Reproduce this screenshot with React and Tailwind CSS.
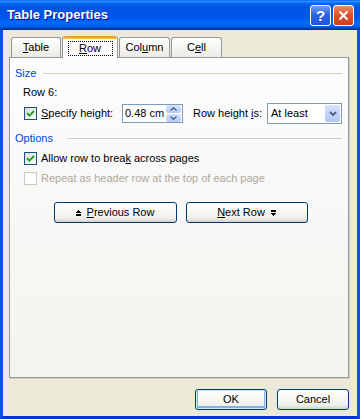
import React from 'react'

const font = { fontFamily: '"Liberation Sans", Arial, sans-serif' }

function Check({ checked, disabled }) {
  return (
    <span
      className={
        disabled
          ? 'flex h-[13px] w-[13px] shrink-0 items-center justify-center border border-[#cac8bb] bg-white'
          : 'flex h-[13px] w-[13px] shrink-0 items-center justify-center border border-[#1c5180] bg-[linear-gradient(135deg,#dcdcd7,#ffffff)]'
      }
    >
      {checked ? (
        <svg width="9" height="9" viewBox="0 0 9 9">
          <path d="M1 4.2 L3.4 6.6 L8 2" stroke="#21a121" strokeWidth="1.9" fill="none" />
        </svg>
      ) : null}
    </span>
  )
}

function Tab({ children, active, w }) {
  if (active) {
    return (
      <div
        className="relative z-10 -mb-px ml-px flex h-[22px] flex-col rounded-t-[3px] border-x border-[#919b9c] bg-[#fcfcfe]"
        style={{ width: w }}
      >
        <div className="h-[3px] rounded-t-[3px] bg-[linear-gradient(180deg,#e68b2c,#ffc83c)]" />
        <div className="flex flex-1 items-center justify-center">
          <span className="flex h-[15px] w-[45px] items-center justify-center border border-dotted border-black">
            {children}
          </span>
        </div>
      </div>
    )
  }
  return (
    <div
      className="ml-px flex h-[20px] items-center justify-center rounded-t-[3px] border-x border-t border-[#919b9c] bg-[linear-gradient(180deg,#ffffff,#f3f3ef_60%,#ecebe6)]"
      style={{ width: w }}
    >
      {children}
    </div>
  )
}

function Btn({ children, w, def }) {
  return (
    <button
      className={
        def
          ? 'flex h-[21px] items-center justify-center rounded-[3px] border border-[#003c74] bg-[linear-gradient(180deg,#ffffff,#f0f0ea_80%,#d6d0c5)] shadow-[inset_0_0_0_1px_#cee7ff,inset_0_-1px_0_2px_#89ade4]'
          : 'flex h-[21px] items-center justify-center rounded-[3px] border border-[#003c74] bg-[linear-gradient(180deg,#ffffff,#f0f0ea_80%,#d6d0c5)]'
      }
      style={{ width: w }}
    >
      {children}
    </button>
  )
}

function UpIcon() {
  return (
    <svg width="5" height="6" viewBox="0 0 5 6" className="shrink-0">
      <rect x="2" y="0" width="1" height="1" fill="#000" />
      <rect x="1" y="1" width="3" height="1" fill="#000" />
      <rect x="0" y="2" width="5" height="1" fill="#000" />
      <rect x="0" y="4" width="5" height="2" fill="#000" />
    </svg>
  )
}

function DownIcon() {
  return (
    <svg width="5" height="6" viewBox="0 0 5 6" className="shrink-0">
      <rect x="0" y="0" width="5" height="2" fill="#000" />
      <rect x="0" y="3" width="5" height="1" fill="#000" />
      <rect x="1" y="4" width="3" height="1" fill="#000" />
      <rect x="2" y="5" width="1" height="1" fill="#000" />
    </svg>
  )
}

export default function App() {
  return (
    <div className="flex h-[419px] w-[360px] flex-col bg-[#ece9d8] text-[11px] text-black" style={font}>
      {/* title bar */}
      <div className="flex h-[30px] shrink-0 items-center bg-[linear-gradient(180deg,#0058ee_0%,#3593ff_4%,#288eff_6%,#127dff_8%,#036ffc_10%,#0262ee_14%,#0057e5_20%,#0054e3_24%,#0055eb_56%,#005bf5_66%,#026afe_76%,#0062ef_86%,#0052d6_92%,#0040ab_94%,#003092_100%)] pl-[7px] pr-[6px]">
        <span className="flex-1 text-[13px] font-bold text-white [text-shadow:1px_1px_#0f1089]">Table Properties</span>
        <div className="flex h-[21px] w-[21px] items-center justify-center rounded-[3px] border border-white bg-[linear-gradient(180deg,#6d9cf7,#2a65e6_45%,#1a55dc)] text-[15px] font-bold leading-none text-white">
          ?
        </div>
        <div className="ml-[2px] flex h-[21px] w-[21px] items-center justify-center rounded-[3px] border border-white bg-[linear-gradient(180deg,#ee8a6c,#e0522b_45%,#c8411a)]">
          <svg width="11" height="11" viewBox="0 0 11 11">
            <path d="M1.5 1.5 L9.5 9.5 M9.5 1.5 L1.5 9.5" stroke="#fff" strokeWidth="2" />
          </svg>
        </div>
      </div>

      {/* body */}
      <div className="flex flex-1 flex-col border-x-[3px] border-b-[3px] border-x-[#0c52e6] border-b-[#0835d8] pl-[6px] pr-[5px] pt-[6px]">
        <div className="flex h-[21px] items-end pl-px">
          <Tab w={50}>
            <span><u>T</u>able</span>
          </Tab>
          <Tab w={56} active>
            <span><u>R</u>ow</span>
          </Tab>
          <Tab w={51}>
            <span>Col<u>u</u>mn</span>
          </Tab>
          <Tab w={51}>
            <span>C<u>e</u>ll</span>
          </Tab>
        </div>

        <div className="flex h-[321px] w-[340px] flex-col border border-[#919b9c] bg-[linear-gradient(180deg,#fcfcfe,#f4f3ee)] pl-[5px] pr-[6px] shadow-[1px_1px_0_#d0cebf]">
          <div className="mt-[8px] flex h-[14px] items-center">
            <span className="text-[#0046d5]">Size</span>
            <div className="ml-[7px] h-px flex-1 bg-[#d0d0bf]" />
          </div>
          <div className="ml-[8px] mt-[5px] flex h-[14px] items-center">Row 6:</div>
          <div className="ml-[9px] mt-[3px] flex h-[22px] items-center">
            <Check checked />
            <span className="ml-[4px] w-[81px]"><u>S</u>pecify height:</span>
            <div className="flex h-[19px] w-[61px] items-center border border-[#7f9db9] bg-white pl-[2px]">
              <span className="flex-1">0.48 cm</span>
              <div className="mr-px flex h-[17px] w-[15px] flex-col gap-px">
                <div className="flex flex-1 items-center justify-center rounded-[2px] bg-[linear-gradient(180deg,#d6e2fd,#b5c9f8)]">
                  <svg width="7" height="4" viewBox="0 0 7 4"><path d="M0.5 3.5 L3.5 0.8 L6.5 3.5" stroke="#4d6185" strokeWidth="1.4" fill="none" /></svg>
                </div>
                <div className="flex flex-1 items-center justify-center rounded-[2px] bg-[linear-gradient(180deg,#d6e2fd,#b5c9f8)]">
                  <svg width="7" height="4" viewBox="0 0 7 4"><path d="M0.5 0.5 L3.5 3.2 L6.5 0.5" stroke="#4d6185" strokeWidth="1.4" fill="none" /></svg>
                </div>
              </div>
            </div>
            <span className="ml-[10px] w-[74px]">Row height <u>i</u>s:</span>
            <div className="flex h-[21px] w-[75px] items-center border border-[#7f9db9] bg-white pl-[3px]">
              <span className="flex-1">At least</span>
              <div className="mr-px flex h-[17px] w-[15px] items-center justify-center rounded-[2px] bg-[linear-gradient(180deg,#d6e2fd,#b2c6f7)]">
                <svg width="8" height="5" viewBox="0 0 8 5"><path d="M1 1 L4 4 L7 1" stroke="#4d6185" strokeWidth="1.8" fill="none" /></svg>
              </div>
            </div>
          </div>
          <div className="mt-[7px] flex h-[14px] items-center">
            <span className="text-[#0046d5]">Options</span>
            <div className="ml-[14px] h-px flex-1 bg-[#d0d0bf]" />
          </div>
          <div className="ml-[9px] mt-[6px] flex h-[14px] items-center">
            <Check checked />
            <span className="ml-[4px]">Allow row to brea<u>k</u> across pages</span>
          </div>
          <div className="ml-[9px] mt-[6px] flex h-[14px] items-center">
            <Check disabled />
            <span className="ml-[4px] text-[#aca899]">Repeat as header row at the top of each page</span>
          </div>
          <div className="mt-[17px] flex justify-center gap-[9px] pl-[4px]">
            <Btn w={123}>
              <span className="flex items-center gap-[6px]">
                <UpIcon />
                <span><u>P</u>revious Row</span>
              </span>
            </Btn>
            <Btn w={122}>
              <span className="flex items-center gap-[6px]">
                <span><u>N</u>ext Row</span>
                <DownIcon />
              </span>
            </Btn>
          </div>
        </div>

        <div className="mt-[11px] flex justify-end gap-[10px] pr-[3px]">
          <Btn w={72} def>OK</Btn>
          <Btn w={72}>Cancel</Btn>
        </div>
      </div>
    </div>
  )
}
